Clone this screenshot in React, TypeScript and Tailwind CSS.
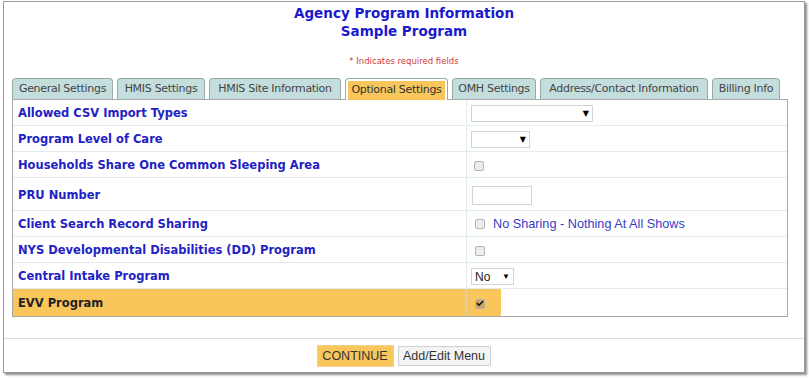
import { Check } from "lucide-react";

const tabs = [
  { label: "General Settings", w: "w-[101px]" },
  { label: "HMIS Settings", w: "w-[88px]" },
  { label: "HMIS Site Information", w: "w-[132px]" },
  { label: "Optional Settings", w: "w-[103px]", active: true },
  { label: "OMH Settings", w: "w-[84px]" },
  { label: "Address/Contact Information", w: "w-[168px]" },
  { label: "Billing Info", w: "w-[68px]" },
];

const Select = ({ className, value }: { className: string; value?: string }) => (
  <div
    className={`flex items-center justify-between border border-[#d4d4d4] bg-white px-[3px] text-[12px] text-[#222] ${className}`}
  >
    <span>{value}</span>
    <span className="text-[8px] text-black">▼</span>
  </div>
);

const Box = ({ checked }: { checked?: boolean }) => (
  <span
    className={`flex h-[10px] w-[10px] items-center justify-center rounded-[2px] border border-[#b4b4b4] ${
      checked ? "bg-[#c9a45a]" : "bg-[#ececec]"
    }`}
  >
    {checked && <Check className="h-[9px] w-[9px] text-black" strokeWidth={4} />}
  </span>
);

const rows = [
  {
    label: "Allowed CSV Import Types",
    h: "h-[26px]",
    value: <Select className="h-[17px] w-[122px]" />,
  },
  {
    label: "Program Level of Care",
    h: "h-[26px]",
    value: <Select className="h-[17px] w-[59px]" />,
  },
  {
    label: "Households Share One Common Sleeping Area",
    h: "h-[26px]",
    value: (
      <div className="pl-[3px]">
        <Box />
      </div>
    ),
  },
  {
    label: "PRU Number",
    h: "h-[33px]",
    value: <div className="ml-[1px] h-[19px] w-[60px] border border-[#d4d4d4] bg-white" />,
  },
  {
    label: "Client Search Record Sharing",
    h: "h-[26px]",
    value: (
      <div className="flex items-center gap-[8px] pl-[4px]">
        <Box />
        <span className="font-['Liberation_Sans',Arial,sans-serif] text-[12.7px] text-[#3b3bc8]">
          No Sharing - Nothing At All Shows
        </span>
      </div>
    ),
  },
  {
    label: "NYS Developmental Disabilities (DD) Program",
    h: "h-[26px]",
    value: (
      <div className="pl-[4px]">
        <Box />
      </div>
    ),
  },
  {
    label: "Central Intake Program",
    h: "h-[26px]",
    value: <Select className="h-[17px] w-[43px] font-['Liberation_Sans',Arial,sans-serif]" value="No" />,
  },
];

export default function App() {
  return (
    <div className="h-[379px] w-[809px] bg-white pl-[3px] pt-[1px] font-['DejaVu_Sans',Verdana,sans-serif]">
      <div className="flex h-[372px] w-[802px] flex-col border border-[#9a9a9a] shadow-[2px_2px_2px_rgba(0,0,0,0.45)]">
        <div className="flex flex-col items-center pt-[2px] text-[13.5px] font-bold leading-[18px] text-[#1a1acc]">
          <div>Agency Program Information</div>
          <div>Sample Program</div>
          <div className="mt-[15px] text-[8.5px] font-normal leading-[12px] text-[#d23b3b]">
            * Indicates required fields
          </div>
        </div>

        <div className="ml-[8px] mt-[11px] flex w-[776px] flex-col">
          <div className="flex items-end gap-[4px]">
            {tabs.map((t) =>
              t.active ? (
                <div
                  key={t.label}
                  className={`relative -mb-[1px] flex h-[22px] ${t.w} rounded-t-[4px] border border-b-0 border-[#9aa] bg-white px-[2px] pt-[2px]`}
                >
                  <div className="flex flex-1 items-center justify-center whitespace-nowrap bg-[#f8c65a] text-[11px] tracking-[-0.3px] text-[#333]">
                    {t.label}
                  </div>
                </div>
              ) : (
                <div
                  key={t.label}
                  className={`flex h-[21px] ${t.w} items-center justify-center whitespace-nowrap rounded-t-[4px] border border-b-0 border-[#9aa] bg-[#c4dede] text-[11px] tracking-[-0.3px] text-[#444]`}
                >
                  {t.label}
                </div>
              )
            )}
          </div>

          <div className="flex flex-col border border-[#a9a9a9] bg-white">
            {rows.map((r) => (
              <div key={r.label} className={`flex ${r.h} border-b border-[#e2ecec]`}>
                <div className="flex w-[454px] items-center border-r border-[#e2ecec] pl-[5px] pt-[3px] text-[11.5px] font-bold text-[#2222c4]">
                  {r.label}
                </div>
                <div className="flex flex-1 items-center pl-[4px] pt-[2px]">{r.value}</div>
              </div>
            ))}
            <div className="flex h-[27px]">
              <div className="flex w-[454px] items-center border-r border-[#e2d2a8] bg-[#f8c65a] pl-[5px] pt-[3px] text-[11.5px] font-bold text-[#222]">
                EVV Program
              </div>
              <div className="flex w-[34px] items-center bg-[#f8c65a] pl-[8px] pt-[2px]">
                <Box checked />
              </div>
            </div>
          </div>
        </div>

        <div className="mt-[21px] border-t border-[#dcdcdc]" />
        <div className="flex justify-center gap-[5px] pt-[7px] font-['Liberation_Sans',Arial,sans-serif] text-[12.5px]">
          <button className="h-[20px] w-[75px] bg-[#f8c65a] text-[#333] shadow-[0_0_0_1px_#f0d090]">CONTINUE</button>
          <button className="h-[20px] w-[93px] border border-[#d0d0d0] bg-[#f4f4f4] text-[#333]">Add/Edit Menu</button>
        </div>
      </div>
    </div>
  );
}
